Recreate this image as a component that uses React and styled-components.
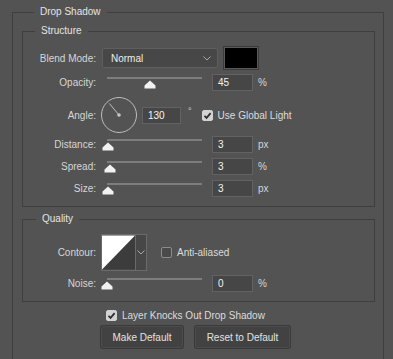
import React from "react";
import styled, { createGlobalStyle } from "styled-components";

const GlobalStyle = createGlobalStyle`
  html, body {
    margin: 0;
    padding: 0;
    background: #535353;
  }
  body {
    padding-top: 5px;
    font-family: "Liberation Sans", Arial, sans-serif;
    font-size: 10px;
    color: #d8d8d8;
  }
  * { box-sizing: border-box; }
`;

const App = () => {
  return (
    <>
      <GlobalStyle />
      <Outer>
        <Legend $ml={12}>Drop Shadow</Legend>

        <Group>
          <Legend $ml={12}>Structure</Legend>

          <Row $h={24}>
            <Label>Blend Mode:</Label>
            <Select>
              <span>Normal</span>
              <Chevron />
            </Select>
            <Swatch />
          </Row>

          <SliderRow label="Opacity:" value={45} max={100} unit="%" mt={4} />

          <Row $h={38} $mt={5}>
            <Label>Angle:</Label>
            <Dial angle={130} />
            <NumberBox $w={39} $ml={4}>130</NumberBox>
            <Degree>°</Degree>
            <Check checked style={{ marginLeft: 10 }} label="Use Global Light" />
          </Row>

          <SliderRow label="Distance:" value={3} max={250} unit="px" mt={2} />
          <SliderRow label="Spread:" value={3} max={100} unit="%" mt={5} />
          <SliderRow label="Size:" value={3} max={250} unit="px" mt={5} />
        </Group>

        <Group $mt={5} $pb={9}>
          <Legend $ml={13}>Quality</Legend>

          <Row $h={37}>
            <Label>Contour:</Label>
            <Contour>
              <ContourPreview>
                <svg width="34" height="35" viewBox="0 0 34 35">
                  <rect width="34" height="35" fill="#3c3c3c" />
                  <polygon points="0,0 34,0 0,35" fill="#ffffff" />
                </svg>
              </ContourPreview>
              <ContourArrow>
                <Chevron />
              </ContourArrow>
            </Contour>
            <Check style={{ marginLeft: 14 }} label="Anti-aliased" />
          </Row>

          <SliderRow label="Noise:" value={0} max={100} unit="%" mt={4} />
        </Group>

        <KnockRow>
          <Check checked label="Layer Knocks Out Drop Shadow" />
        </KnockRow>

        <Buttons>
          <Button $w={82}>Make Default</Button>
          <Button $w={95}>Reset to Default</Button>
        </Buttons>
      </Outer>
    </>
  );
};

const SliderRow = ({ label, value, max, unit, mt }) => (
  <Row $h={17} $mt={mt}>
    <Label>{label}</Label>
    <Slider>
      <Track />
      <Thumb style={{ left: 5 + (value / max) * 95 - 6 }}>
        <svg width="12" height="9" viewBox="0 0 12 9">
          <path d="M6 0.5 L11.5 5.5 L11.5 8.5 L0.5 8.5 L0.5 5.5 Z" fill="#f2f2f2" />
        </svg>
      </Thumb>
    </Slider>
    <NumberBox $w={41} $ml={10}>
      {value}
    </NumberBox>
    <Unit>{unit}</Unit>
  </Row>
);

const Dial = ({ angle }) => {
  const r = (angle * Math.PI) / 180;
  const x = 19 + Math.cos(r) * 15;
  const y = 19 - Math.sin(r) * 15;
  return (
    <DialBox>
      <svg width="38" height="38" viewBox="0 0 38 38">
        <circle cx="19" cy="19" r="17.5" fill="none" stroke="#bdbdbd" strokeWidth="1" />
        <line x1="19" y1="19" x2={x} y2={y} stroke="#bdbdbd" strokeWidth="1" />
        <circle cx="19" cy="19" r="1.8" fill="#c8c8c8" />
      </svg>
    </DialBox>
  );
};

const Check = ({ checked, label, style }) => (
  <CheckLabel style={style}>
    <Box $checked={checked}>
      {checked && (
        <svg width="9" height="9" viewBox="0 0 9 9">
          <path d="M1.5 4.8 L3.6 6.9 L7.6 2.2" fill="none" stroke="#2e2e2e" strokeWidth="1.8" />
        </svg>
      )}
    </Box>
    <span>{label}</span>
  </CheckLabel>
);

const Chevron = () => (
  <svg width="8" height="5" viewBox="0 0 8 5">
    <path d="M0.5 0.5 L4 4 L7.5 0.5" fill="none" stroke="#a8a8a8" strokeWidth="1" />
  </svg>
);

export default App;

const Outer = styled.fieldset`
  margin: 0 0 0 12px;
  width: 372px;
  height: 360px;
  border: 1px solid #3f3f3f;
  border-bottom: none;
  padding: 5px 8px 0 9px;
`;

const Group = styled.fieldset`
  margin: ${(p) => p.$mt || 0}px 0 0 0;
  border: 1px solid #3f3f3f;
  padding: 8px 0 ${(p) => (p.$pb != null ? p.$pb : 9)}px 0;
  display: flex;
  flex-direction: column;
`;

const Legend = styled.legend`
  margin-left: ${(p) => p.$ml}px;
  padding: 0 6px;
  font-size: 10px;
  line-height: 14px;
  color: #e4e4e4;
`;

const Row = styled.div`
  display: flex;
  align-items: center;
  height: ${(p) => p.$h}px;
  margin-top: ${(p) => p.$mt || 0}px;
`;

const Label = styled.div`
  width: 73px;
  flex: none;
  text-align: right;
  margin-right: 6px;
  color: #d6d6d6;
`;

const Select = styled.div`
  width: 116px;
  height: 20px;
  display: flex;
  align-items: center;
  justify-content: space-between;
  padding: 0 6px 0 8px;
  background: #474747;
  border: 1px solid #5e5e5e;
  border-radius: 2px;
  color: #ececec;
`;

const Swatch = styled.div`
  width: 36px;
  height: 24px;
  margin-left: 5px;
  background: #000;
  border: 1px solid #3a3a3a;
  box-shadow: 0 0 0 1px #5a5a5a inset;
`;

const Slider = styled.div`
  position: relative;
  width: 100px;
  height: 17px;
  flex: none;
`;

const Track = styled.div`
  margin: 3px 0 0 5px;
  width: 95px;
  height: 2px;
  background: #7d7d7d;
`;

const Thumb = styled.div`
  position: absolute;
  top: 6px;
  width: 12px;
  height: 9px;
  display: flex;
`;

const NumberBox = styled.div`
  width: ${(p) => p.$w}px;
  height: 17px;
  margin-left: ${(p) => p.$ml}px;
  flex: none;
  padding: 0 5px;
  display: flex;
  align-items: center;
  background: #464646;
  border: 1px solid #626262;
  color: #f4f4f4;
`;

const Unit = styled.div`
  margin-left: 5px;
  color: #d6d6d6;
`;

const Degree = styled.div`
  margin: 0 0 8px 7px;
  color: #d6d6d6;
  font-size: 9px;
`;

const DialBox = styled.div`
  width: 38px;
  height: 38px;
  margin-left: -2px;
  display: flex;
`;

const CheckLabel = styled.label`
  display: flex;
  align-items: center;
  gap: 5px;
  color: #dcdcdc;
`;

const Box = styled.span`
  width: 11px;
  height: 11px;
  border-radius: 2px;
  display: flex;
  align-items: center;
  justify-content: center;
  background: ${(p) => (p.$checked ? "#d2d2d2" : "#4a4a4a")};
  border: 1px solid ${(p) => (p.$checked ? "#d2d2d2" : "#8c8c8c")};
`;

const Contour = styled.div`
  display: flex;
  margin-left: -1px;
  height: 37px;
  border: 1px solid #6a6a6a;
`;

const ContourPreview = styled.div`
  width: 34px;
  display: flex;
  border-right: 1px solid #6a6a6a;
`;

const ContourArrow = styled.div`
  width: 10px;
  display: flex;
  align-items: center;
  justify-content: center;
  background: #474747;
`;

const KnockRow = styled.div`
  display: flex;
  margin: 7px 0 0 84px;
  height: 12px;
  align-items: center;
`;

const Buttons = styled.div`
  display: flex;
  gap: 12px;
  margin: 5px 0 0 79px;
`;

const Button = styled.button`
  width: ${(p) => p.$w}px;
  height: 22px;
  padding: 0;
  font-family: inherit;
  font-size: 10px;
  color: #e2e2e2;
  background: #424242;
  border: 1px solid #4c4c4c;
  border-radius: 2px;
  box-shadow: 0 0 0 1px #3a3a3a;
`;
